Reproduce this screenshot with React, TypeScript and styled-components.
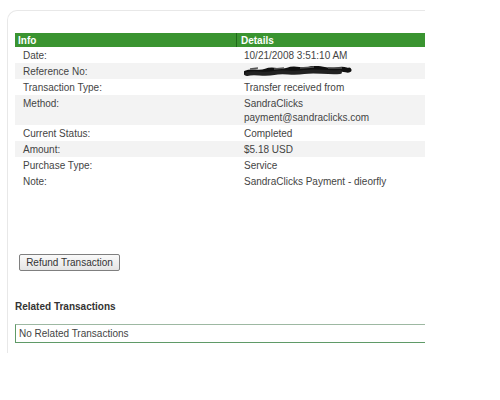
import React from 'react';
import styled, { createGlobalStyle } from 'styled-components';

const GlobalStyle = createGlobalStyle`
  html, body {
    margin: 0;
    padding: 0;
    background: #fff;
  }
  body {
    font-family: 'Liberation Sans', Arial, sans-serif;
    font-size: 10px;
    color: #444;
  }
`;

const Page = styled.div`
  width: 500px;
  height: 400px;
  overflow: hidden;
  padding: 10px 0 0 7px;
  box-sizing: border-box;
`;

const Panel = styled.div`
  width: 418px;
  height: 343px;
  box-sizing: border-box;
  border-top: 1px solid #e8e8e8;
  border-left: 1px solid #e8e8e8;
  border-top-left-radius: 10px;
  padding: 22px 0 0 7px;
  overflow: hidden;
`;

const Table = styled.div`
  width: 410px;
  display: grid;
  grid-template-columns: 221px 1fr;
`;

const HeadCell = styled.div<{ $divider?: boolean }>`
  background: #3a9430;
  color: #fff;
  font-weight: bold;
  font-size: 10px;
  height: 14px;
  line-height: 15px;
  padding-left: ${p => (p.$divider ? '4px' : '3px')};
  border-left: ${p => (p.$divider ? '1px solid #1f6a1a' : 'none')};
`;

const Cell = styled.div<{ $shade?: boolean }>`
  background: ${p => (p.$shade ? '#f3f3f3' : '#fff')};
  line-height: 14px;
  padding: 2px 0 0 8px;
  color: #444;
`;

const Redacted = styled.svg`
  display: block;
  margin-top: 1px;
`;

const RefundButton = styled.button`
  margin: 65px 0 0 4px;
  height: 17px;
  width: 101px;
  padding: 0;
  font-family: 'Liberation Sans', Arial, sans-serif;
  font-size: 10px;
  color: #333;
  background: linear-gradient(#fafafa, #e4e4e4);
  border: 1px solid #7f7f7f;
  border-radius: 2px;
`;

const SectionTitle = styled.div`
  margin-top: 30px;
  font-weight: bold;
  font-size: 10px;
  color: #333;
`;

const RelatedBox = styled.div`
  margin-top: 12px;
  height: 19px;
  box-sizing: border-box;
  border: 1px solid #5f9a67;
  border-top-color: #9db8a2;
  border-right: none;
  padding-left: 3px;
  line-height: 17px;
  color: #444;
`;

const rows: { label: string; value: React.ReactNode; shade?: boolean }[] = [
  { label: 'Date:', value: '10/21/2008 3:51:10 AM' },
  {
    label: 'Reference No:',
    shade: true,
    value: (
      <Redacted width="108" height="11" viewBox="0 0 108 11">
        <path
          d="M2 7 C8 4 14 8 22 5 S36 7 44 4 S58 6 66 3 S82 6 92 4 S102 5 105 4"
          stroke="#111"
          strokeWidth="5"
          fill="none"
          strokeLinecap="round"
        />
        <path
          d="M3 8 C10 6 20 9 30 7 S48 8 60 6 S80 7 96 6"
          stroke="#222"
          strokeWidth="4"
          fill="none"
          strokeLinecap="round"
        />
        <path d="M6 3 L14 2 M30 3 L40 2 M56 2 L70 1 M84 2 L98 2" stroke="#555" strokeWidth="1.5" />
      </Redacted>
    ),
  },
  { label: 'Transaction Type:', value: 'Transfer received from' },
  {
    label: 'Method:',
    shade: true,
    value: (
      <>
        SandraClicks
        <br />
        payment@sandraclicks.com
      </>
    ),
  },
  { label: 'Current Status:', value: 'Completed' },
  { label: 'Amount:', value: '$5.18 USD', shade: true },
  { label: 'Purchase Type:', value: 'Service' },
  { label: 'Note:', value: 'SandraClicks Payment - dieorfly' },
];

export default function App(): JSX.Element {
  return (
    <Page>
      <GlobalStyle />
      <Panel>
        <Table>
          <HeadCell>Info</HeadCell>
          <HeadCell $divider>Details</HeadCell>
          {rows.map(row => (
            <React.Fragment key={row.label}>
              <Cell $shade={row.shade}>{row.label}</Cell>
              <Cell $shade={row.shade}>{row.value}</Cell>
            </React.Fragment>
          ))}
        </Table>
        <RefundButton>Refund Transaction</RefundButton>
        <SectionTitle>Related Transactions</SectionTitle>
        <RelatedBox>No Related Transactions</RelatedBox>
      </Panel>
    </Page>
  );
}
